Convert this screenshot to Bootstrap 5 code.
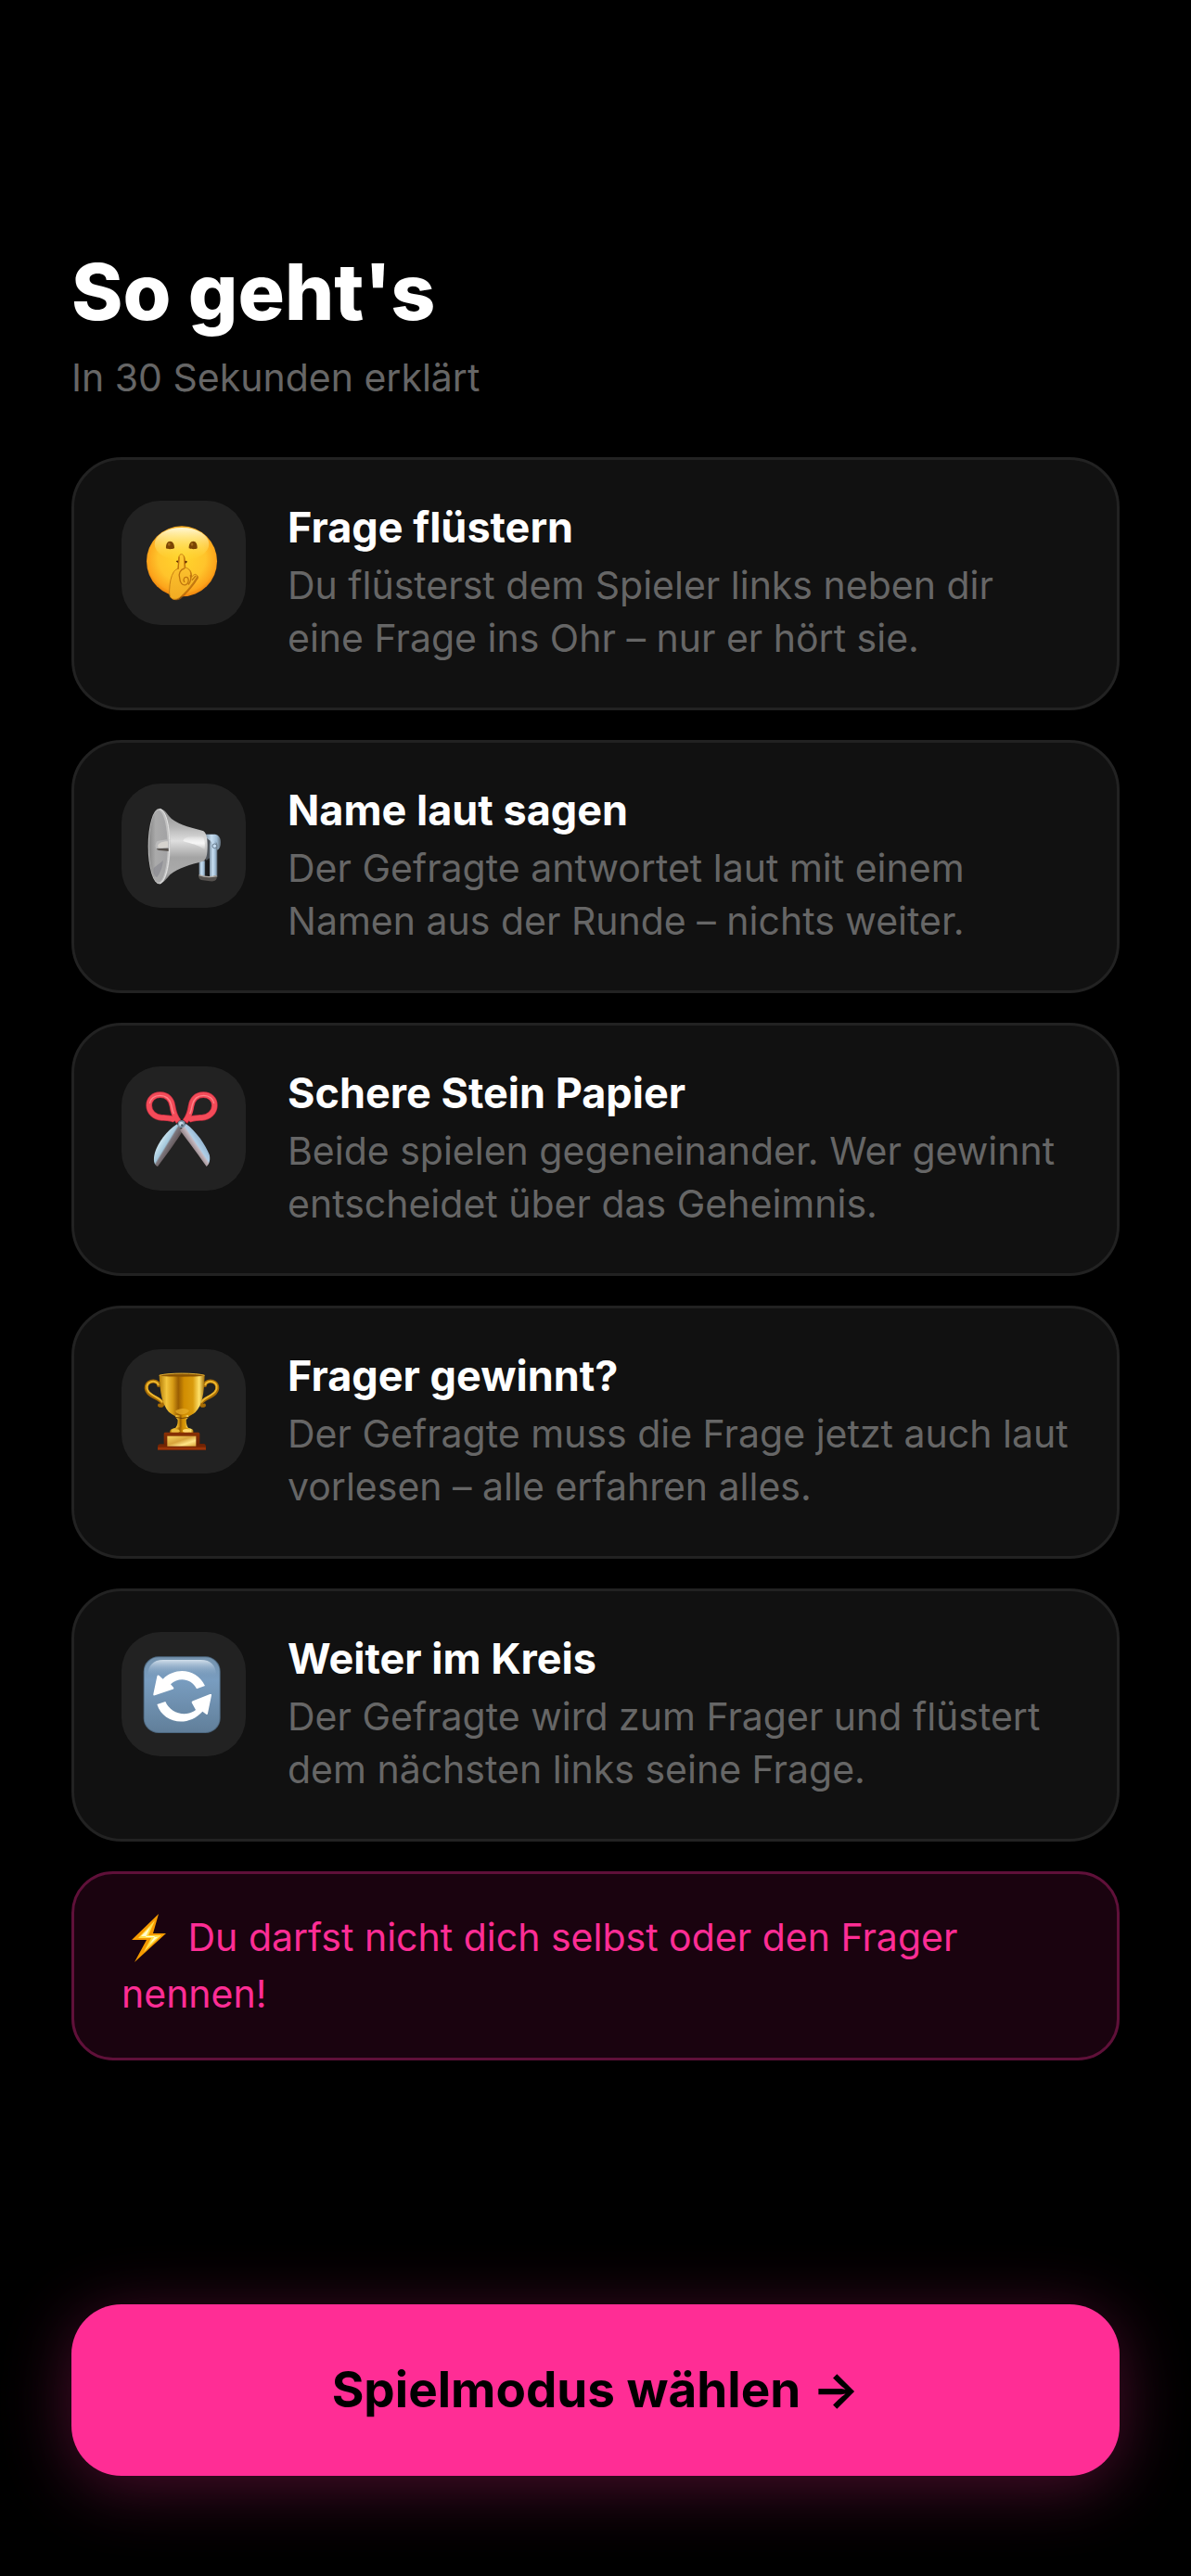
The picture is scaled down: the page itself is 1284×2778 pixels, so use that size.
<!DOCTYPE html>
<html lang="de">
<head>
<meta charset="utf-8">
<meta name="viewport" content="width=device-width, initial-scale=1">
<title>So geht's</title>
<link href="https://cdn.jsdelivr.net/npm/bootstrap@5.3.0/dist/css/bootstrap.min.css" rel="stylesheet">
<style>
  body { background: #000; color: #fff; font-family: Inter, "Liberation Sans", sans-serif; }
  .screen { padding: 263px 77px 108px; }
  .headline { font-size: 84px; line-height: 104px; font-weight: 800; }
  .subline { font-size: 41px; line-height: 60px; color: #666; margin-top: 10px; }
  .steps { gap: 32px; margin-top: 56px; }
  .step { background: #111; border: 3px solid #222; border-radius: 54px; padding: 44px 51px 46px; gap: 45px; }
  .step-icon { width: 134px; height: 134px; border-radius: 42px; background: #222; }
  .step-icon svg { width: 134px; height: 134px; }
  .step-title { font-size: 45px; line-height: 57px; font-weight: 700; margin-bottom: 6px; }
  .step-text { font-size: 41px; line-height: 57px; color: #666; }
  .hint { background: #1a030f; border: 3px solid #5f1039; border-radius: 45px; color: #ff2d95; font-size: 41px; line-height: 61px; padding: 38px 51px; margin-top: 32px; }
  .hint svg { width: 60px; height: 54px; vertical-align: -13px; }
  .go { background: #ff2d95; color: #000; border: 0; border-radius: 54px; height: 185px; font-size: 53px; font-weight: 700; box-shadow: 0 12px 72px rgba(255, 45, 149, .3); }
  .go:hover, .go:active { background: #ff2d95; color: #000; }
</style>
</head>
<body>
<main class="screen min-vh-100 d-flex flex-column">
  <header>
    <h1 class="headline mb-0">So geht's</h1>
    <p class="subline mb-0">In 30 Sekunden erklärt</p>
  </header>

  <ol class="steps list-unstyled d-flex flex-column mb-0">
    <li class="step d-flex align-items-start">
      <div class="step-icon flex-shrink-0">
        <svg viewBox="33 30 402 402" aria-hidden="true">
          <defs>
            <radialGradient id="face" cx=".5" cy=".45" r=".56"><stop offset="0" stop-color="#ffd52c"/><stop offset=".6" stop-color="#ffc42b"/><stop offset=".87" stop-color="#fca41b"/><stop offset="1" stop-color="#e97c0a"/></radialGradient>
            <linearGradient id="shine" x1="0" y1="0" x2="0" y2="1"><stop offset="0" stop-color="#fffce0" stop-opacity=".95"/><stop offset="1" stop-color="#ffe53a" stop-opacity="0"/></linearGradient>
            <linearGradient id="hand" x1="0" y1="0" x2="0" y2="1"><stop offset="0" stop-color="#ffca32"/><stop offset="1" stop-color="#f2ab22"/></linearGradient>
          </defs>
          <circle cx="228" cy="226" r="114" fill="url(#face)"/>
          <ellipse cx="228" cy="170" rx="88" ry="53" fill="url(#shine)"/>
          <path d="M177 184c-1-13 4-23 13-23s15 10 14 23c-6 3-20 4-27 0zM251 184c-1-13 5-23 14-23s14 10 13 23c-6 4-20 3-27 0z" fill="#7b4503"/>
          <ellipse cx="187" cy="171" rx="4" ry="5" fill="#a46b18"/><ellipse cx="261" cy="171" rx="4" ry="5" fill="#a46b18"/>
          <path d="M209 226q5-5 9 0v6q-5-1-9-6zM237 225q5-2 9 2-3 6-9 6z" fill="#5e2c04"/>
          <path d="M219 214c1-12 15-12 16 1l2 33c12-1 20 9 20 21l1 9 7-6c8-7 17 0 11 9-12 19-25 36-42 52-9 9-18 18-29 17-17-1-19-16-18-31 1-24 5-44 14-58 4-6 10-9 16-11z" fill="#a85a05" opacity=".7" transform="translate(4 2)"/>
          <path d="M219 212c1-12 15-12 16 1l2 34c12-1 20 9 20 21l1 10 7-7c8-7 16 0 10 9-12 19-25 36-42 52-9 9-18 18-29 17-15-1-17-16-16-31 1-24 5-44 14-58 4-6 10-9 15-11z" fill="url(#hand)" stroke="#c98012" stroke-width="3"/>
          <path d="M219 213l-3 37M236 249c-12 3-20 17-15 31 1 16 9 25 20 22 7-3 10-12 8-19-1-7-11-8-14-1-2 4-1 7 1 10M256 272c3 9 0 20-6 28M262 286l10-12" fill="none" stroke="#bf750e" stroke-width="4" stroke-linecap="round"/>
        </svg>
      </div>
      <div>
        <h2 class="step-title">Frage flüstern</h2>
        <p class="step-text mb-0">Du flüsterst dem Spieler links neben dir eine Frage ins Ohr – nur er hört sie.</p>
      </div>
    </li>

    <li class="step d-flex align-items-start">
      <div class="step-icon flex-shrink-0">
        <svg viewBox="33 30 402 402" aria-hidden="true">
          <defs>
            <linearGradient id="horn" x1="0" y1="0" x2="0" y2="1"><stop offset="0" stop-color="#8d8d8d"/><stop offset=".25" stop-color="#b5b5b5"/><stop offset=".43" stop-color="#dedede"/><stop offset=".65" stop-color="#a4a4a4"/><stop offset=".85" stop-color="#aaa"/><stop offset="1" stop-color="#777"/></linearGradient>
            <linearGradient id="mouth" x1="0" y1="0" x2="1" y2="0"><stop offset="0" stop-color="#888"/><stop offset=".35" stop-color="#aaa"/><stop offset="1" stop-color="#a2a2a4"/></linearGradient>
            <linearGradient id="steel" x1="0" y1="0" x2="1" y2="0"><stop offset="0" stop-color="#7f94a6"/><stop offset=".4" stop-color="#c8dff2"/><stop offset=".75" stop-color="#9db9d1"/><stop offset="1" stop-color="#5c6872"/></linearGradient>
            <linearGradient id="glint" x1="0" y1="0" x2="0" y2="1"><stop offset="0" stop-color="#fff" stop-opacity=".1"/><stop offset=".5" stop-color="#fff" stop-opacity=".8"/><stop offset="1" stop-color="#fff" stop-opacity="0"/></linearGradient>
          </defs>
          <path d="M304 194h32c12 2 18 13 18 26 0 14-4 24-14 26h-30z" fill="url(#steel)"/>
          <path d="M284 280h20v52h-20z" fill="url(#steel)"/>
          <path d="M304 280h14v50h-14z" fill="#19191b"/>
          <path d="M306 205l14 10v55l-14 8z" fill="#4f555c"/>
          <path d="M318 230c0-9 6-15 13-15s12 6 12 15v103h-25z" fill="url(#steel)"/>
          <path d="M283 325c15 7 42 8 58 2v10c-2 8-12 10-22 9l-28-4c-7-2-9-8-8-17z" fill="#55514e"/>
          <path d="M284 326c15 6 40 7 57 3" stroke="#b5afa9" stroke-width="4" fill="none"/>
          <circle cx="334" cy="232" r="7" fill="#c5dcf0" stroke="#667b8d" stroke-width="3"/>
          <path d="M156 111c12 0 22 12 31 25 18 22 62 36 107 46 12 3 17 20 17 49 0 28-3 45-13 50-43 11-82 22-108 44-12 14-22 29-34 29z" fill="url(#horn)"/>
          <path d="M232 216c4-15 28-18 62-14 8 2 10 24 8 43-20-18-46-21-70-29z" fill="url(#glint)"/>
          <ellipse cx="155" cy="233" rx="36" ry="122" fill="#c1c1c1"/>
          <ellipse cx="152" cy="233" rx="30" ry="117" fill="url(#mouth)"/>
          <path d="M137 303l31-24c-3 23-10 41-20 54-9-1-14-16-11-30z" fill="#85858d" opacity=".6"/>
          <path d="M178 211l-26 4c-7 2-9 10-9 17s3 13 9 14l32 3v-36z" fill="#bababa"/>
          <path d="M155 224c9-6 19-7 28-7v19c-14 1-29 4-32-1-2-4 0-8 4-11z" fill="#d6d3ce"/>
          <path d="M146 241c2 4 5 5 8 5l31 3v-10z" fill="#55504c"/>
          <path d="M158 112c21 9 31 59 30 123-1 60-12 109-31 119" stroke="#e3e3e3" stroke-width="3" fill="none"/>
        </svg>
      </div>
      <div>
        <h2 class="step-title">Name laut sagen</h2>
        <p class="step-text mb-0">Der Gefragte antwortet laut mit einem Namen aus der Runde – nichts weiter.</p>
      </div>
    </li>

    <li class="step d-flex align-items-start">
      <div class="step-icon flex-shrink-0">
        <svg viewBox="33 30 402 402" aria-hidden="true">
          <defs>
            <linearGradient id="bladeL" gradientUnits="userSpaceOnUse" x1="158" y1="262" x2="204" y2="290"><stop offset="0" stop-color="#d6ecf5"/><stop offset=".5" stop-color="#a3c7dc"/><stop offset=".6" stop-color="#7d777d"/><stop offset="1" stop-color="#5d5052"/></linearGradient>
            <linearGradient id="bladeR" gradientUnits="userSpaceOnUse" x1="298" y1="262" x2="256" y2="290"><stop offset="0" stop-color="#8cacc9"/><stop offset=".55" stop-color="#afcfe7"/><stop offset=".64" stop-color="#c4b8bf"/><stop offset="1" stop-color="#8d7c80"/></linearGradient>
          </defs>
          <g fill="none">
            <path d="M218 209c-11-13-17-31-20-50-3-20-16-37-40-37-21 0-36 15-36 34 0 23 19 39 41 40 20 1 35 1 43 8" stroke="#c52f40" stroke-width="20" stroke-linejoin="round"/>
            <path d="M217 207c-11-13-18-31-20-50-3-20-16-35-39-35-21 0-36 15-36 34 0 23 19 39 41 40 20 1 35 1 43 8" stroke="#f44b59" stroke-width="16"/>
            <path d="M202 184c-5-12-6-20-8-30-5-19-17-30-37-30-18 0-31 11-33 26" stroke="#ff8389" stroke-width="4"/>
            <path d="M238 209c11-13 17-31 20-50 3-20 16-37 40-37 21 0 36 15 36 34 0 23-19 39-41 40-20 1-35 1-43 8" stroke="#c52f40" stroke-width="20"/>
            <path d="M239 207c11-13 18-31 20-50 3-20 16-35 39-35 21 0 36 15 36 34 0 23-19 39-41 40-20 1-35 1-43 8" stroke="#f44b59" stroke-width="16"/>
            <path d="M254 184c5-12 6-20 8-30 5-19 17-30 37-30 18 0 31 11 33 26" stroke="#ff8389" stroke-width="4"/>
          </g>
          <path d="M212 217L231 238C214 268 182 311 150 354C137 350 135 331 141 309C150 278 180 238 212 217z" fill="url(#bladeL)"/>
          <path d="M242 216C275 240 306 286 317 315C321 330 318 345 308 354C285 321 250 274 222 237z" fill="url(#bladeR)"/>
          <circle cx="227" cy="217" r="12" fill="#8199ac"/><circle cx="226" cy="216" r="7" fill="#c6d9e6"/><circle cx="229" cy="221" r="4" fill="#50606e"/>
        </svg>
      </div>
      <div>
        <h2 class="step-title">Schere Stein Papier</h2>
        <p class="step-text mb-0">Beide spielen gegeneinander. Wer gewinnt entscheidet über das Geheimnis.</p>
      </div>
    </li>

    <li class="step d-flex align-items-start">
      <div class="step-icon flex-shrink-0">
        <svg viewBox="33 30 402 402" aria-hidden="true">
          <defs>
            <linearGradient id="cup" x1="0" y1="0" x2="1" y2="0"><stop offset="0" stop-color="#b27b08"/><stop offset=".16" stop-color="#f3c43c"/><stop offset=".3" stop-color="#d59a14"/><stop offset=".42" stop-color="#9a5e02"/><stop offset=".55" stop-color="#d18d02"/><stop offset=".74" stop-color="#d99b0d"/><stop offset=".88" stop-color="#ffe26b"/><stop offset="1" stop-color="#9d6806"/></linearGradient>
            <linearGradient id="wood" x1="0" y1="0" x2="0" y2="1"><stop offset="0" stop-color="#8a3105"/><stop offset=".7" stop-color="#6d2203"/><stop offset="1" stop-color="#8e2d05"/></linearGradient>
            <linearGradient id="plate" x1="0" y1="0" x2="1" y2="1"><stop offset="0" stop-color="#f6d562"/><stop offset=".45" stop-color="#d8a43c"/><stop offset=".7" stop-color="#ffe487"/><stop offset="1" stop-color="#d9a236"/></linearGradient>
          </defs>
          <g fill="none" stroke-linecap="round">
            <path d="M153 147c0-11-14-16-26-12-16 6-17 23-8 35 12 15 36 19 45 32 5 8-1 12-8 10M303 147c0-11 14-16 26-12 16 6 17 23 8 35-12 15-36 19-45 32-5 8 1 12 8 10" stroke="#a66b05" stroke-width="12"/>
            <path d="M152 145c-2-9-14-13-25-9-14 5-15 20-7 31 12 15 36 20 44 33M304 145c2-9 14-13 25-9 14 5 15 20 7 31-12 15-36 20-44 33" stroke="#edb72e" stroke-width="6"/>
          </g>
          <path d="M155 115c29-8 118-8 147 0-2 57-7 96-30 119-11 9-22 12-28 20h-30c-6-8-18-13-28-21-21-22-29-64-31-118z" fill="url(#cup)"/>
          <ellipse cx="228" cy="114" rx="73" ry="5" fill="#8b5504"/>
          <path d="M155 115c29-9 118-9 147 0" fill="none" stroke="#e3af31" stroke-width="3"/>
          <path d="M207 230c14-10 34-10 45-1-8 15-37 17-45 1z" fill="#e7ae28" opacity=".75"/>
          <path d="M207 244h43c3 8-7 11-8 16 0 13 4 23 11 29h-50c8-7 12-15 12-29-1-6-10-8-8-16z" fill="url(#cup)"/>
          <path d="M207 250q22 7 43 0" fill="none" stroke="#6d4005" stroke-width="3"/>
          <path d="M196 288c17-7 47-7 64 0 8 4 7 14 0 17h-65c-8-4-7-13 1-17z" fill="url(#cup)"/>
          <ellipse cx="208" cy="295" rx="13" ry="6" fill="#e9bb3e"/><ellipse cx="243" cy="294" rx="12" ry="6" fill="#ffd86b"/>
          <path d="M174 299h108q4 0 4 5v32h15q5 2 5 10v10H150v-10q0-8 6-9h14v-33q0-5 4-5z" fill="url(#wood)"/>
          <path d="M181 311h93v33h-93z" fill="url(#plate)"/>
          <path d="M151 351h154" stroke="#a1390b" stroke-width="4"/>
        </svg>
      </div>
      <div>
        <h2 class="step-title">Frager gewinnt?</h2>
        <p class="step-text mb-0">Der Gefragte muss die Frage jetzt auch laut vorlesen – alle erfahren alles.</p>
      </div>
    </li>

    <li class="step d-flex align-items-start">
      <div class="step-icon flex-shrink-0">
        <svg viewBox="33 30 402 402" aria-hidden="true">
          <defs>
            <linearGradient id="tile" x1="0" y1="0" x2="0" y2="1"><stop offset="0" stop-color="#7593ae"/><stop offset=".3" stop-color="#799dc0"/><stop offset="1" stop-color="#617f9a"/></linearGradient>
            <linearGradient id="gloss" x1="0" y1="0" x2="0" y2="1"><stop offset="0" stop-color="#d2dfeb"/><stop offset="1" stop-color="#7fa3c7" stop-opacity="0"/></linearGradient>
          </defs>
          <rect x="104" y="109" width="249" height="248" rx="49" fill="#4d6880"/>
          <rect x="107" y="112" width="243" height="242" rx="46" fill="url(#tile)"/>
          <path d="M118 172c0-34 18-52 50-52h121c33 0 50 18 50 52z" fill="url(#gloss)"/>
          <g fill="#fff">
            <path d="M303 204l-27 10c-16-33-57-41-84-15l9 10c2 3 1 5-2 6l-58 20c-4 1-6-1-5-5l12-57c1-4 4-5 7-2l12 11c43-42 110-32 136 22z"/>
            <path d="M148 264l27-9c15 36 59 50 93 31l5-4-12-22c-2-3-1-5 3-7l55-22c4-1 6 0 5 4l-12 58c-1 5-4 5-7 2l-10-8c-48 53-128 38-147-23z"/>
          </g>
        </svg>
      </div>
      <div>
        <h2 class="step-title">Weiter im Kreis</h2>
        <p class="step-text mb-0">Der Gefragte wird zum Frager und flüstert dem nächsten links seine Frage.</p>
      </div>
    </li>
  </ol>

  <p class="hint mb-0"><svg viewBox="-6 0 60 54" aria-hidden="true">
      <path d="M34 1L5 29h16L8 53l34-31H28z" fill="#f59a00"/>
      <path d="M30 8L12 27h14l-8 15 19-18H23z" fill="#ffe04a"/>
      <path d="M25 15L15 25h15l-6 9 9-8H20z" fill="#fffbd0"/>
    </svg> Du darfst nicht dich selbst oder den Frager nennen!</p>

  <button type="button" class="go btn w-100 mt-auto">Spielmodus wählen →</button>
</main>
<script src="https://cdn.jsdelivr.net/npm/bootstrap@5.3.0/dist/js/bootstrap.bundle.min.js"></script>
</body>
</html>
